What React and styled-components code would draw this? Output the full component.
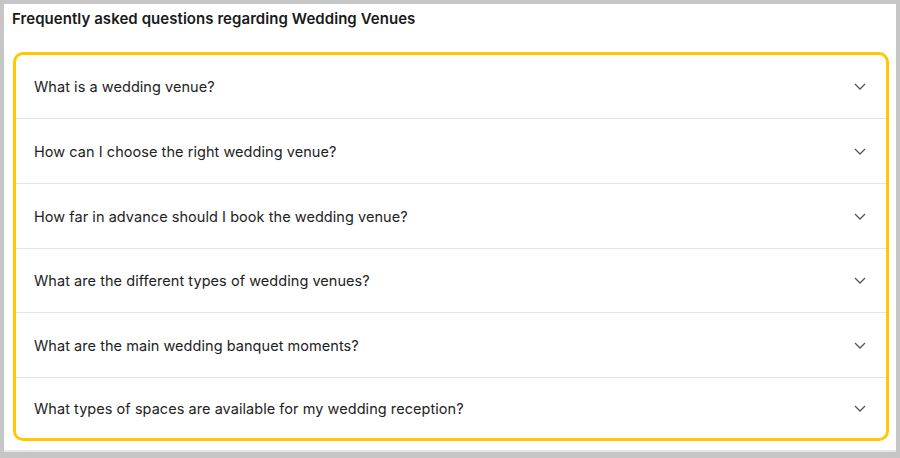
import React from 'react';
import styled, { createGlobalStyle } from 'styled-components';

const GlobalStyle = createGlobalStyle`
  html, body {
    margin: 0;
    padding: 0;
    background: #ffffff;
  }
  body {
    font-family: 'Inter', 'Lato', sans-serif;
    color: #222222;
  }
`;

const Frame = styled.div`
  box-sizing: border-box;
  width: 900px;
  height: 458px;
  border-style: solid;
  border-color: #c6c6c6;
  border-width: 4px 4px 6px 4px;
  background: #ffffff;
  display: flex;
  flex-direction: column;
`;

const Inner = styled.div`
  flex: 1;
  display: flex;
  flex-direction: column;
  padding: 5px 7px 0 9px;
  border-bottom: 2px solid #e6e6e6;
`;

const Title = styled.h2`
  margin: 0 0 0 -1px;
  font-size: 15px;
  font-weight: 600;
  line-height: 20px;
  letter-spacing: 0.06px;
  color: #1a1a1a;
`;

const Accordion = styled.div`
  margin-top: 23px;
  border: 3px solid #ffc800;
  border-radius: 10px;
  overflow: hidden;
  display: flex;
  flex-direction: column;
`;

const Item = styled.div`
  display: flex;
  align-items: center;
  justify-content: space-between;
  height: ${props => props.h}px;
  padding: 0 20px 0 18px;
  border-top: ${props => (props.first ? 'none' : '1px solid #e4e4e4')};
  cursor: pointer;
`;

const Question = styled.span`
  font-size: 14.5px;
  letter-spacing: 0.05px;
  color: #222222;
`;

const Chevron = () => (
  <svg width="12" height="7" viewBox="0 0 12 7" fill="none">
    <path d="M1 1 L6 6 L11 1" stroke="#555555" strokeWidth="1.3" />
  </svg>
);

// row heights read off the screenshot (dividers at 118, 183, 248, 312, 377)
const heights = [63, 64, 64, 63, 64, 60];

const questions = [
  'What is a wedding venue?',
  'How can I choose the right wedding venue?',
  'How far in advance should I book the wedding venue?',
  'What are the different types of wedding venues?',
  'What are the main wedding banquet moments?',
  'What types of spaces are available for my wedding reception?',
];

export default function App() {
  return (
    <>
      <GlobalStyle />
      <Frame>
        <Inner>
          <Title>Frequently asked questions regarding Wedding Venues</Title>
          <Accordion>
            {questions.map((q, i) => (
              <Item key={q} first={i === 0} h={heights[i]}>
                <Question>{q}</Question>
                <Chevron />
              </Item>
            ))}
          </Accordion>
        </Inner>
      </Frame>
    </>
  );
}
